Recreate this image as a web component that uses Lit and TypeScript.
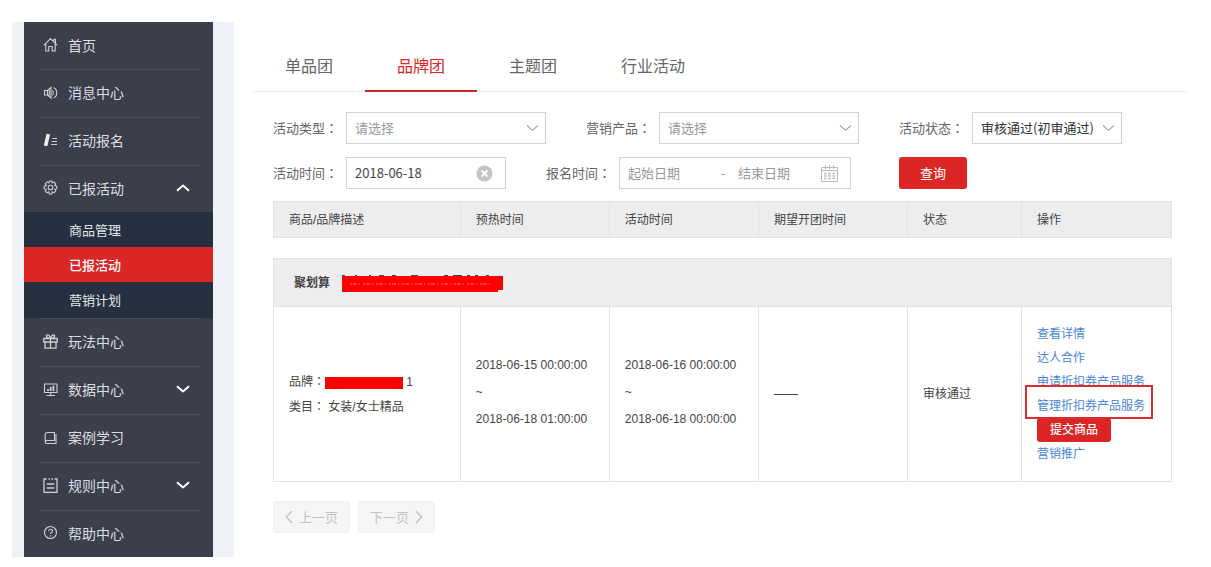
import { LitElement, html, css, svg, nothing } from "lit";
import { customElement, property } from "lit/decorators.js";

interface MenuItem {
  label: string;
  icon: string;
  children?: string[];
  expandable?: boolean;
}

const MENU: MenuItem[] = [
  { label: "首页", icon: "home" },
  { label: "消息中心", icon: "sound" },
  { label: "活动报名", icon: "signup" },
  { label: "已报活动", icon: "gear", expandable: true, children: ["商品管理", "已报活动", "营销计划"] },
  { label: "玩法中心", icon: "gift" },
  { label: "数据中心", icon: "chart", expandable: true },
  { label: "案例学习", icon: "book" },
  { label: "规则中心", icon: "rules", expandable: true },
  { label: "帮助中心", icon: "help" },
];

const ICONS: Record<string, unknown> = {
  home: svg`<path d="M.8 8.300 7.500 1.500 14.200 8.300M10.800 4.500V2.300h1.700v4M2.800 7v7h3V9.500h3.400V14h3V7"/>`,
  sound: svg`<path d="M1.500 5.500h3v4.500h-3zM4.500 5.500 8 2.500v10.500L4.500 10M9.500 5.300q1.600 2.500 0 5M10.500 2.800c4.300 1 4.300 8.900 0 9.900M6.300 5v5.500"/>`,
  signup: svg`<path d="M5.300 1.200 2.600 12.800" stroke="#eee" stroke-width="3.600"/><path d="M9.500 5.500h4.500M8.800 8.500h5.200M8 11.500h6" stroke-width="1"/>`,
  gear: svg`<circle cx="7.500" cy="7.500" r="2.300"/><path d="M6.300 1h2.400l.5 1.900 1.700-1 1.900 1.900-1.100 1.700 2.100.6v2.600l-2.100.6 1.100 1.700-1.900 1.900-1.700-1-.5 2.100H6.300l-.5-2.100-1.700 1L2.200 11l1.100-1.700-2.100-.6V6.100l2.100-.6-1.100-1.700 1.900-1.900 1.700 1z"/>`,
  gift: svg`<path d="M.8 4.500h13.400v3.500H.8zM2 8v6.200h11V8M7.500 4.500v9.700M7.500 4.300C3 4.500 2.300.8 4.600.8 6.500.8 7.500 4.300 7.500 4.300s1-3.500 2.900-3.500C12.700.8 12 4.500 7.500 4.300" stroke-width="1.300"/>`,
  chart: svg`<path d="M1.500 2h12.500v8.500H1.500zM7.700 10.500v3M3.500 13.500h8.500"/><path d="M5 9V7M7.700 9V5M10.400 9V3.800" stroke-width="1.800"/>`,
  book: svg`<path d="M4.500 2.500h7v8H4q-1.800 0-1.800 1.500t1.800 1.500h9V4M2.200 12V4.500q0-2 2.300-2"/>`,
  rules: svg`<path d="M3.500 1H1v13.300h13V1h-2.500M5.500 1h1.500M8.500 1h1.500M3.800 6h7.500M3.800 10h7.500" stroke-width="1.300"/>`,
  help: svg`<circle cx="7.500" cy="7.500" r="6"/><path d="M5.600 6.200c0-2.600 3.900-2.500 3.900-.2 0 1.500-2 1.500-2 3M7.500 10.300v1.200"/>`,
};

const chevron = (cls: string) => html`
  <svg class=${cls} viewBox="0 0 14 8" aria-hidden="true"><path d="M1 1.200 7 6.500 13 1.200" /></svg>
`;

const colonStyle = css`
  .colon { font-family: "Noto Sans CJK TC", sans-serif; }
`;

@customElement("side-menu")
export class SideMenu extends LitElement {
  static styles = css`
    :host { display: block; background: #3b3e4b; }
    .list { list-style: none; margin: 0; padding: 0; }
    .entry + .entry .link::before {
      content: "";
      position: absolute;
      left: 16px;
      right: 13px;
      top: 0;
      height: 1px;
      background: #4c4f5b;
    }
    .link {
      position: relative;
      display: flex;
      align-items: center;
      gap: 10px;
      height: 48px;
      box-sizing: border-box;
      padding: 0 23px 2px 19px;
      color: #dcdde0;
      font-size: 14px;
      text-decoration: none;
    }
    .entry:first-child .link,
    .open .link { height: 47px; }
    .entry:last-child .link { height: 47px; }
    .icon { width: 15px; height: 15px; fill: none; stroke: #cfd0d4; stroke-width: 1.1; }
    .name { flex: 1; }
    .arrow { width: 14px; height: 8px; fill: none; stroke: #fff; stroke-width: 2; }
    .up { transform: rotate(180deg); }
    .sub { list-style: none; margin: 0; padding: 0 0 1px; background: #273041; }
    .sublink {
      display: block;
      height: 35px;
      line-height: 35px;
      padding-left: 45px;
      color: #e2e4e8;
      font-size: 13px;
      text-decoration: none;
    }
    .current { background: #dc2626; color: #fff; font-weight: 500; }
  `;

  render() {
    return html`
      <nav>
        <ul class="list">
          ${MENU.map(
            (m) => html`
              <li class="entry ${m.children ? "open" : ""}">
                <a class="link" href="#">
                  <svg class="icon" viewBox="0 0 15 15" aria-hidden="true">${ICONS[m.icon]}</svg>
                  <span class="name">${m.label}</span>
                  ${m.expandable ? chevron(m.children ? "arrow up" : "arrow") : nothing}
                </a>
                ${m.children
                  ? html`<ul class="sub">
                      ${m.children.map(
                        (c) => html`<li><a class="sublink ${c === "已报活动" ? "current" : ""}" href="#">${c}</a></li>`
                      )}
                    </ul>`
                  : nothing}
              </li>
            `
          )}
        </ul>
      </nav>
    `;
  }
}

@customElement("filter-select")
export class FilterSelect extends LitElement {
  @property() label = "";
  @property() value = "";
  @property({ type: Boolean, reflect: true }) chosen = false;

  static styles = [
    colonStyle,
    css`
      :host { display: flex; align-items: center; gap: 8px; color: #666; font-size: 13px; }
      .box { position: relative; width: 200px; }
      :host([chosen]) .box { width: 150px; }
      .select {
        appearance: none;
        display: block;
        width: 100%;
        height: 32px;
        box-sizing: border-box;
        border: 1px solid #d2d2d2;
        border-radius: 0;
        background: #fff;
        padding: 0 8px;
        color: #999;
        font: inherit;
      }
      :host([chosen]) .select { color: #333; }
      .arrow {
        position: absolute;
        right: 7px;
        top: 12px;
        width: 13px;
        height: 8px;
        fill: none;
        stroke: #999;
        stroke-width: 1.2;
        pointer-events: none;
      }
    `,
  ];

  render() {
    return html`
      <label for="field">${this.label}<span class="colon">：</span></label>
      <div class="box">
        <select class="select" id="field"><option>${this.value}</option></select>
        ${chevron("arrow")}
      </div>
    `;
  }
}

@customElement("filter-form")
export class FilterForm extends LitElement {
  static styles = [
    colonStyle,
    css`
      :host { display: block; color: #666; font-size: 13px; }
      .form { display: flex; flex-direction: column; gap: 13px; }
      .row { display: flex; flex-wrap: wrap; gap: 13px 40px; }
      .field { display: flex; align-items: center; gap: 8px; }
      .box {
        display: flex;
        align-items: center;
        justify-content: space-between;
        box-sizing: border-box;
        height: 32px;
        padding: 0 12px 0 8px;
        border: 1px solid #d2d2d2;
        background: #fff;
      }
      .single { width: 160px; }
      .range { width: 232px; }
      .input {
        width: 80px;
        min-width: 0;
        padding: 0;
        border: 0;
        outline: 0;
        background: none;
        color: #444;
        font: inherit;
      }
      .input::placeholder { color: #999; opacity: 1; }
      .dash { width: 24px; color: #999; text-align: center; }
      .clear { display: flex; padding: 0; border: 0; background: none; }
      .icon { display: block; width: 17px; height: 17px; flex: none; }
      .submit {
        width: 68px;
        height: 32px;
        margin-left: 8px;
        border: 0;
        border-radius: 3px;
        background: #dc2626;
        color: #fff;
        font: inherit;
      }
    `,
  ];

  render() {
    return html`
      <form class="form">
        <div class="row">
          <filter-select label="活动类型" value="请选择"></filter-select>
          <filter-select label="营销产品" value="请选择"></filter-select>
          <filter-select label="活动状态" value="审核通过(初审通过)" chosen></filter-select>
        </div>
        <div class="row">
          <div class="field">
            <label for="day">活动时间<span class="colon">：</span></label>
            <div class="box single">
              <input class="input" id="day" .value=${"2018-06-18"} />
              <button class="clear" type="button" aria-label="清除">
                <svg class="icon" viewBox="0 0 17 17">
                  <circle cx="8.500" cy="8.500" r="8" fill="#c4c4c4" />
                  <path d="M5.500 5.500l6 6M11.500 5.500l-6 6" stroke="#fff" stroke-width="1.800" />
                </svg>
              </button>
            </div>
          </div>
          <div class="field">
            <label for="start">报名时间<span class="colon">：</span></label>
            <div class="box range">
              <input class="input" id="start" placeholder="起始日期" />
              <span class="dash">-</span>
              <input class="input" placeholder="结束日期" aria-label="结束日期" />
              <svg class="icon" viewBox="0 0 17 17" fill="none" stroke="#bbb" aria-hidden="true">
                <path d="M.5 2.500h16v14H.5zM.5 5.500h16M4.500 0v4M8.500 0v4M12.500 0v4" />
                <path d="M3 8.500h11M3 11h11M3 13.500h11" stroke-width="1.500" stroke-dasharray="2.500 1.700" />
              </svg>
            </div>
          </div>
          <button class="submit" type="button">查询</button>
        </div>
      </form>
    `;
  }
}

@customElement("activity-table")
export class ActivityTable extends LitElement {
  static styles = [
    colonStyle,
    css`
      :host { display: block; color: #444; font-size: 12px; }
      .table { width: 100%; border-collapse: collapse; table-layout: fixed; }
      .desc { width: 20.8%; }
      .time { width: 16.6%; }
      .state { width: 12.7%; }
      .cell { border: 1px solid #e2e2e2; padding: 0 15px; text-align: left; font-weight: 400; }
      .head { height: 35px; background: #ededed; }
      .spacer { height: 20px; padding: 0; }
      .group { height: 47px; background: #ededed; }
      .title { display: flex; align-items: center; gap: 12px; padding-left: 5px; font-weight: 700; }
      .mask { display: inline-block; vertical-align: middle; background: #f00; }
      .long { display: block; width: 161px; height: 18px; background: none; }
      .short { width: 78px; height: 12px; }
      .body { height: 174px; }
      .lines { line-height: 24px; }
      .dates { padding-bottom: 4px; line-height: 27px; }
      .actions { display: flex; flex-direction: column; align-items: flex-start; line-height: 24px; }
      .link { position: relative; color: #4a86d4; text-decoration: none; white-space: nowrap; }
      .marked::after {
        content: "";
        position: absolute;
        left: -12px;
        right: -8px;
        top: -9px;
        bottom: -1px;
        box-sizing: border-box;
        border: 2px solid #dd2a2e;
      }
      .push {
        width: 74px;
        height: 24px;
        padding: 0;
        border: 0;
        border-radius: 3px;
        background: #dc2626;
        color: #fff;
        font: inherit;
        font-weight: 500;
      }
    `,
  ];

  render() {
    return html`
      <table class="table">
        <colgroup>
          <col class="desc" />
          <col class="time" />
          <col class="time" />
          <col class="time" />
          <col class="state" />
          <col />
        </colgroup>
        <thead>
          <tr>
            ${["商品/品牌描述", "预热时间", "活动时间", "期望开团时间", "状态", "操作"].map(
              (h) => html`<th class="cell head" scope="col">${h}</th>`
            )}
          </tr>
        </thead>
        <tbody>
          <tr><td class="spacer" colspan="6"></td></tr>
          <tr>
            <td class="cell group" colspan="6">
              <div class="title">
                <span>聚划算</span>
                <svg class="mask long" viewBox="0 0 161 18" aria-hidden="true">
                  <path d="M0 2h161v14h-5v2H0z" fill="#f00" />
                  <path d="M0 1.500h3M13 1.500h2M27 1.500h2M37 1.500h5M50 1.500h4M69 1.500h7M102 1.500h4M111 1.500h9M125 1.500h3M133 1.500h3M144 1.500h3M0 15.500h1.500" stroke="#444" fill="none" />
                  <path d="M8 10h142" stroke="#ff7070" stroke-dasharray="2 1 4 2 1 3" fill="none" />
                </svg>
              </div>
            </td>
          </tr>
          <tr>
            <td class="cell body lines">
              <div>品牌<span class="colon">：</span><span class="mask short"></span> 1</div>
              <div>类目<span class="colon">：</span> 女装/女士精品</div>
            </td>
            <td class="cell dates">2018-06-15 00:00:00<br />~<br />2018-06-18 01:00:00</td>
            <td class="cell dates">2018-06-16 00:00:00<br />~<br />2018-06-18 00:00:00</td>
            <td class="cell">——</td>
            <td class="cell">审核通过</td>
            <td class="cell">
              <div class="actions">
                <a class="link" href="#">查看详情</a>
                <a class="link" href="#">达人合作</a>
                <a class="link" href="#">申请折扣券产品服务</a>
                <a class="link marked" href="#">管理折扣券产品服务</a>
                <button class="push" type="button">提交商品</button>
                <a class="link" href="#">营销推广</a>
              </div>
            </td>
          </tr>
        </tbody>
      </table>
    `;
  }
}

@customElement("app-root")
export class AppRoot extends LitElement {
  static styles = css`
    :host {
      display: block;
      background: #fff;
      font-family: "Noto Sans CJK SC", "Noto Sans", sans-serif;
      line-height: 20px;
    }
    .page { display: flex; align-items: flex-start; padding: 22px 24px 11px 12px; }
    .rail { flex: none; width: 189px; padding: 0 21px 0 12px; background: #eff3f7; }
    .main { flex: 1; min-width: 0; padding: 18px 0 0 19px; }
    .tabs { display: flex; border-bottom: 1px solid #eee; }
    .tab {
      margin-bottom: -1px;
      padding: 0 32px;
      border-bottom: 2px solid transparent;
      color: #666;
      font-size: 16px;
      line-height: 50px;
      text-decoration: none;
    }
    .active { border-color: #c9282d; color: #dc2626; }
    .content { padding: 20px 15px 0 20px; }
    .results { margin-top: 12px; font-family: "Liberation Sans", "Noto Sans CJK SC", sans-serif; }
    .pager { display: flex; gap: 8px; margin-top: 19px; }
    .turn {
      display: flex;
      align-items: center;
      justify-content: center;
      gap: 6px;
      width: 77px;
      height: 32px;
      padding: 0;
      border: 1px solid #f0f0f0;
      border-radius: 3px;
      background: #f5f5f5;
      color: #c4c4c4;
      font: inherit;
      font-size: 13px;
    }
    .caret { width: 8px; height: 14px; fill: none; stroke: #c4c4c4; stroke-width: 1.5; }
  `;

  render() {
    return html`
      <div class="page">
        <aside class="rail"><side-menu></side-menu></aside>
        <main class="main">
          <nav class="tabs">
            ${["单品团", "品牌团", "主题团", "行业活动"].map(
              (t) => html`<a class="tab ${t === "品牌团" ? "active" : ""}" href="#">${t}</a>`
            )}
          </nav>
          <div class="content">
            <filter-form></filter-form>
            <activity-table class="results"></activity-table>
            <div class="pager">
              <button class="turn" type="button" disabled>
                <svg class="caret" viewBox="0 0 8 14" aria-hidden="true"><path d="M7 1 1.500 7 7 13" /></svg>上一页
              </button>
              <button class="turn" type="button" disabled>
                下一页<svg class="caret" viewBox="0 0 8 14" aria-hidden="true"><path d="M1 1 6.500 7 1 13" /></svg>
              </button>
            </div>
          </div>
        </main>
      </div>
    `;
  }
}
